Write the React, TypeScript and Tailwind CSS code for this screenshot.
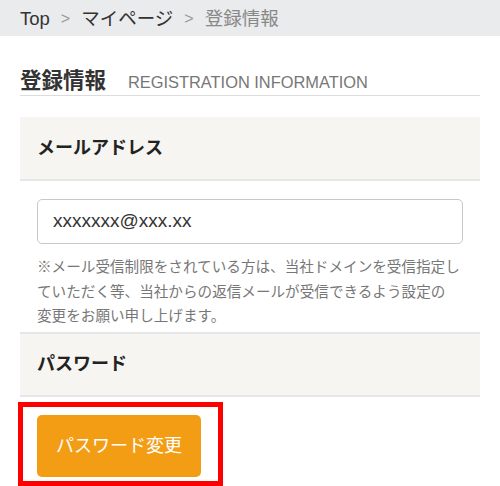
import React from "react";

const font = {
  fontFamily: '"Liberation Sans", "Noto Sans CJK JP", sans-serif',
};

const Breadcrumb: React.FC = () => {
  const sep = <span className="text-[16px] text-[#999] mx-[11px]">&gt;</span>;
  return (
    <nav className="h-[36px] bg-[#e9ebec] flex items-center pl-5 pt-[2px] text-[18.5px]">
      <span className="text-[#333]">Top</span>
      {sep}
      <span className="text-[#333]">マイページ</span>
      {sep}
      <span className="text-[#888]">登録情報</span>
    </nav>
  );
};

const SectionHead: React.FC<{ label: string; className?: string }> = ({ label, className }) => (
  <div
    className={`bg-[#f6f5f1] flex items-center pl-[17px] text-[18px] font-bold text-[#222] border-[#e6e6e6] ${className ?? ""}`}
  >
    {label}
  </div>
);

export default function App() {
  return (
    <div className="w-[500px] h-[486px] overflow-hidden bg-white" style={font}>
      <Breadcrumb />
      <main className="px-5">
        <div className="mt-[33px] flex items-baseline border-b border-[#dcdcdc] leading-[25px]">
          <h1 className="text-[21.5px] font-bold text-[#333]">登録情報</h1>
          <span className="ml-[22px] text-[16.4px] text-[#777]">REGISTRATION INFORMATION</span>
        </div>

        <SectionHead label="メールアドレス" className="mt-[21px] h-[64px] border-b-2" />

        <div className="mx-[17px] mt-[18px] h-[45px] border border-[#c8c8c8] rounded-[5px] flex items-center pl-[15px] text-[19px] text-[#333]">
          xxxxxxx@xxx.xx
        </div>

        <p className="mx-[17px] mt-[11px] text-[14.6px] leading-[24.5px] text-[#777] whitespace-nowrap">
          ※メール受信制限をされている方は、当社ドメインを受信指定し
          <br />
          ていただく等、当社からの返信メールが受信できるよう設定の
          <br />
          変更をお願い申し上げます。
        </p>

        <SectionHead label="パスワード" className="mt-[3.5px] h-[65px] border-y-2" />

        <div className="mt-[5px] -ml-[2px] w-[205px] h-[84px] border-[5px] border-[#ff0000] pl-[14px] pr-[17px] pt-[8px] pb-[4px]">
          <button className="w-[164px] h-[62px] rounded-[5px] bg-[#f39d15] text-white text-[18px]">
            パスワード変更
          </button>
        </div>
      </main>
    </div>
  );
}
